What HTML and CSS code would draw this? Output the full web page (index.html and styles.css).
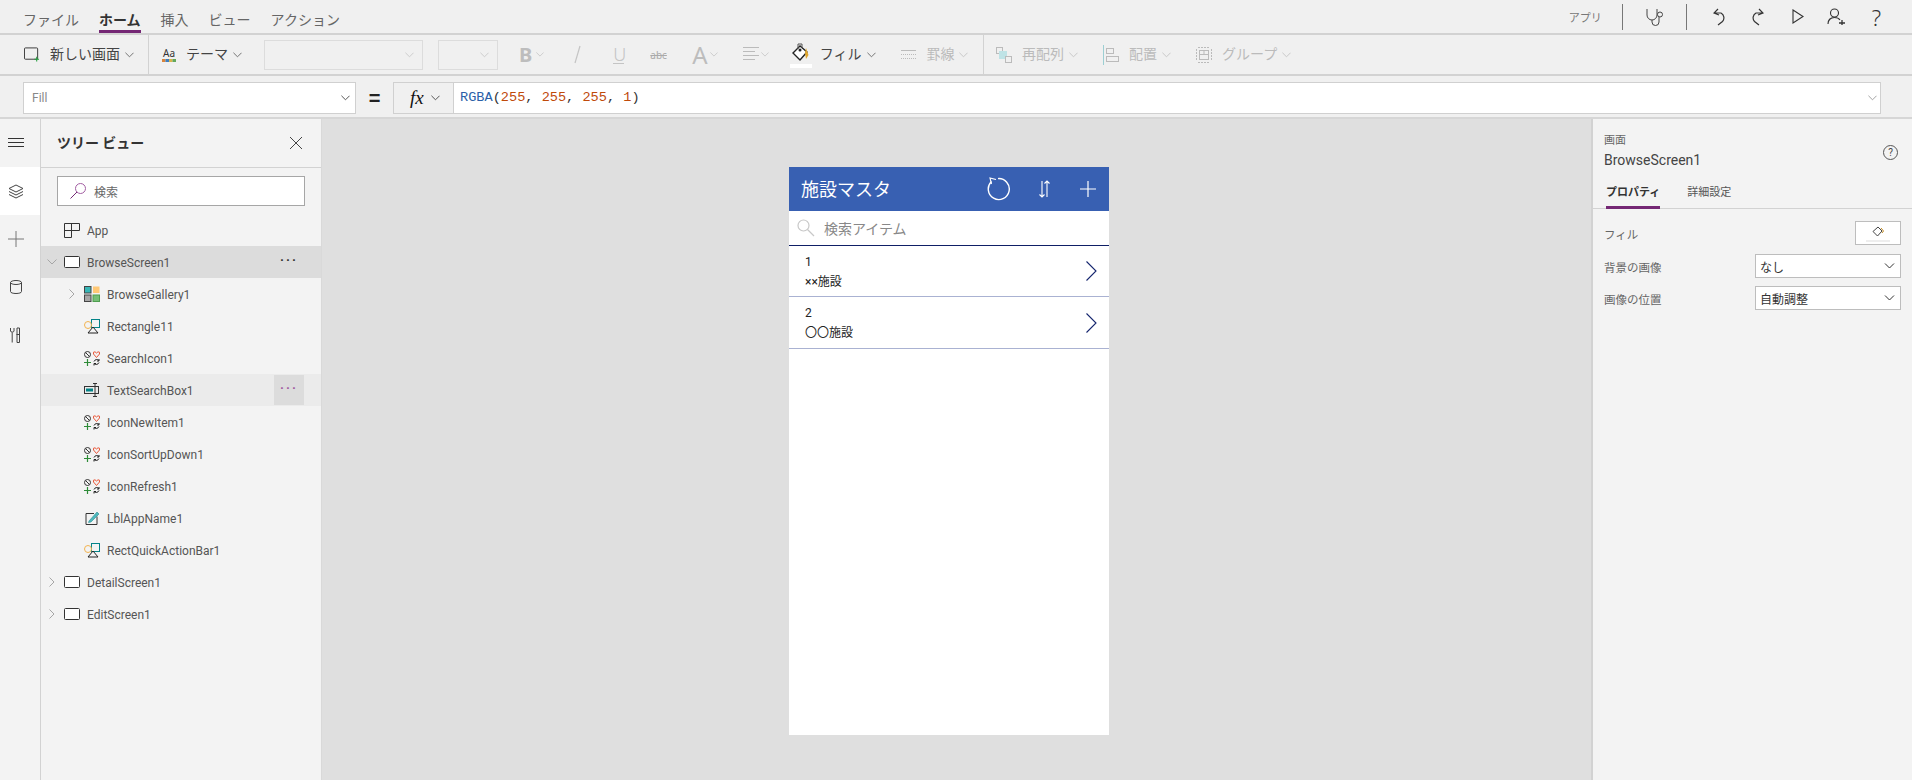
FILE: index.html
```html
<!DOCTYPE html>
<html lang="ja">
<head>
<meta charset="utf-8">
<title>Power Apps Studio</title>
<link rel="stylesheet" href="styles.css">
</head>
<body>
<svg class="sprite" xmlns="http://www.w3.org/2000/svg">
  <symbol id="chev" viewBox="0 0 10 6"><path d="M.5.5 5 5 9.5.5" fill="none" stroke="currentColor"/></symbol>
  <symbol id="chevr" viewBox="0 0 6 10"><path d="M.5.5 5 5 .5 9.500" fill="none" stroke="currentColor"/></symbol>
  <symbol id="screen" viewBox="0 0 16 12"><rect x=".5" y=".5" width="15" height="11" rx="1" fill="#fff" stroke="#333"/></symbol>
  <symbol id="shapes" viewBox="0 0 16 15"><rect x="7.500" y=".5" width="8" height="8" fill="none" stroke="#038387"/><path d="M9 8 14 14H4Z" fill="#f3f3f3" stroke="#222"/><circle cx="4" cy="6" r="3.500" fill="none" stroke="#f2b350"/></symbol>
  <symbol id="icons" viewBox="0 0 16 15"><circle cx="3.500" cy="3.500" r="3" fill="none" stroke="#333"/><path d="M1.500 1.500 5.500 5.500" stroke="#333"/><path d="M12.500 6.500 9.500 3V1.200L11 .8 12.500 2 14 .8 15.500 1.200V3Z" fill="none" stroke="#e8583a"/><path d="M0 11.500h7M3.500 8v7" stroke="#2e8b38" stroke-width="1.200"/><path d="M10 10.500A3 3 0 0 1 15 9.500M15 11.500A3 3 0 0 1 10 12.500M15 8v2h-2M10 14.500V12.500h2" fill="none" stroke="#222"/></symbol>
</svg>

<header class="menubar">
  <nav class="tabs">
    <span class="tab">ファイル</span>
    <span class="tab tab-on">ホーム</span>
    <span class="tab">挿入</span>
    <span class="tab">ビュー</span>
    <span class="tab">アクション</span>
  </nav>
  <div class="actions">
    <span class="app-label">アプリ</span>
    <i class="vsep sep-a"></i>
    <svg class="act steth" width="20" height="18" viewBox="0 0 20 18"><path d="M1 1V7A5 5 0 0 0 11 7V1M6 12V14A3.500 3.500 0 0 0 13 14V9" fill="none" stroke="#444"/><circle cx="14" cy="6.500" r="2.500" fill="none" stroke="#444"/></svg>
    <i class="vsep sep-b"></i>
    <svg class="act undo" width="15" height="18" viewBox="0 0 15 18"><path d="M5 1 1 5 6 7M1 5H8A5.500 5.500 0 0 1 9.500 13.500L5 17" fill="none" stroke="#333" stroke-width="1.200"/></svg>
    <svg class="act redo" width="15" height="18" viewBox="0 0 15 18"><path d="M10 1 14 5 9 7M14 5H7A5.500 5.500 0 0 0 5.500 13.500L10 17" fill="none" stroke="#333" stroke-width="1.200"/></svg>
    <svg class="act play" width="12" height="15" viewBox="0 0 12 15"><path d="M1 1 11 7.500 1 14Z" fill="none" stroke="#333" stroke-width="1.100"/></svg>
    <svg class="act user" width="18" height="17" viewBox="0 0 18 17"><circle cx="7.500" cy="5" r="4" fill="none" stroke="#333" stroke-width="1.100"/><path d="M1 16C1 12 3.500 9.500 7.500 9.500 10 9.500 12 10.500 13 12" fill="none" stroke="#333" stroke-width="1.100"/><path d="M12 15h6M15 12v6" stroke="#333" stroke-width="1.300"/></svg>
    <span class="act qmark">?</span>
  </div>
</header>

<div class="toolbar">
  <div class="tg tg-first">
    <div class="tool">
      <svg class="ico16" width="16" height="15" viewBox="0 0 17 15"><rect x=".5" y=".5" width="14" height="12" rx="1" fill="none" stroke="#333"/><path d="M11 12.500h5M13.500 10v5" stroke="#1f9d39" stroke-width="1.100"/></svg>
      <span class="lbl">新しい画面</span>
      <svg class="cv" width="9" height="6"><use href="#chev"/></svg>
    </div>
  </div>
  <div class="tg tg-mid">
    <div class="tool">
      <span class="aa"><span class="aa-t">Aa</span><svg class="aa-bar" width="14" height="3" viewBox="0 0 14 3"><rect width="3.500" height="3" fill="#d9843b"/><rect x="3.500" width="3.500" height="3" fill="#3f7fbf"/><rect x="7" width="3.500" height="3" fill="#d9b44a"/><rect x="10.500" width="3.500" height="3" fill="#63a85c"/></svg></span>
      <span class="lbl l-theme">テーマ</span>
      <svg class="cv" width="9" height="6"><use href="#chev"/></svg>
    </div>
    <div class="dd dd-font"><svg class="cv-off" width="9" height="6"><use href="#chev"/></svg></div>
    <div class="dd dd-size"><svg class="cv-off" width="9" height="6"><use href="#chev"/></svg></div>
    <div class="tool off t-b"><span class="g-b">B</span><svg class="cv" width="8" height="5"><use href="#chev"/></svg></div>
    <svg class="t-i" width="7" height="19" viewBox="0 0 7 19"><path d="M6 1 1 18" stroke="#c4c4c4" stroke-width="1.200"/></svg>
    <div class="t-u"><span class="g-u">U</span></div>
    <div class="t-abc"><span class="g-abc">abc</span></div>
    <div class="tool off t-a"><span class="g-a">A</span><svg class="cv" width="8" height="5"><use href="#chev"/></svg></div>
    <div class="tool off t-al">
      <svg width="16" height="17" viewBox="0 0 16 17"><path d="M0 1.500h16M0 5.500h12M0 9.500h16M0 13.500h12" stroke="#bbb"/></svg>
      <svg class="cv" width="8" height="5"><use href="#chev"/></svg>
    </div>
    <div class="tool t-fill">
      <span class="fill-wrap">
        <svg width="19" height="22" viewBox="0 0 19 22"><path d="M9 3 2 10 9 17 16 9Z" fill="#fff" stroke="#222" stroke-width="1.400"/><path d="M7 1V6M7 1H11V5" fill="none" stroke="#555"/><circle cx="9" cy="7" r="1.500" fill="#222"/><path d="M15 5 17.500 12 15 16 14 10Z" fill="#e0a72e"/></svg>
        <i class="swatch"></i>
      </span>
      <span class="lbl l-fill">フィル</span>
      <svg class="cv cv-fill" width="9" height="6"><use href="#chev"/></svg>
    </div>
    <div class="tool off t-bd">
      <svg width="15" height="11" viewBox="0 0 15 11"><path d="M0 1.500h15" stroke="#bbb"/><path d="M0 5.500h15M0 9.500h15" stroke="#bbb" stroke-dasharray="1 1"/></svg>
      <span class="lbl">罫線</span>
      <svg class="cv" width="9" height="6"><use href="#chev"/></svg>
    </div>
  </div>
  <div class="tg tg-last">
    <div class="tool off">
      <svg width="16" height="16" viewBox="0 0 16 16"><rect x=".5" y=".5" width="6" height="6" fill="none" stroke="#bbb"/><rect x="3" y="4" width="8" height="8" fill="#bfe3e6"/><rect x="9.500" y="9.500" width="6" height="6" fill="#f0f0f0" stroke="#bbb"/></svg>
      <span class="lbl">再配列</span>
      <svg class="cv" width="9" height="6"><use href="#chev"/></svg>
    </div>
    <div class="tool off t-pos">
      <svg width="16" height="20" viewBox="0 0 16 20"><path d="M.5 0V20" stroke="#9ccfd3"/><rect x="3.500" y="3.500" width="7" height="5" fill="none" stroke="#bbb"/><rect x="3.500" y="11.500" width="12" height="5" fill="none" stroke="#bbb"/></svg>
      <span class="lbl">配置</span>
      <svg class="cv" width="9" height="6"><use href="#chev"/></svg>
    </div>
    <div class="tool off t-grp">
      <svg width="16" height="16" viewBox="0 0 16 16"><path d="M.5 2V14M15.500 2V14M2 .5H14M2 15.500H14" fill="none" stroke="#bbb" stroke-dasharray="2 1"/><rect x="3.500" y="3.500" width="9" height="9" fill="none" stroke="#bbb"/><path d="M3.500 7.500H12.500M8 3.500V7.500" stroke="#bbb"/></svg>
      <span class="lbl">グループ</span>
      <svg class="cv" width="9" height="6"><use href="#chev"/></svg>
    </div>
  </div>
</div>

<div class="formula">
  <div class="prop"><span>Fill</span><svg class="cv-f" width="9" height="6"><use href="#chev"/></svg></div>
  <span class="eq">=</span>
  <div class="fx"><span class="fx-t">fx</span><svg class="cv-f" width="9" height="6"><use href="#chev"/></svg></div>
  <div class="fbox"><code class="code"><span class="fn">RGBA</span>(<span class="num">255</span>, <span class="num">255</span>, <span class="num">255</span>, <span class="num">1</span>)</code><svg class="cv-g" width="9" height="6"><use href="#chev"/></svg></div>
</div>

<main class="body">
  <aside class="rail">
    <div class="rail-i"><svg width="16" height="10" viewBox="0 0 16 10"><path d="M0 .5h16M0 4.500h16M0 8.500h16" stroke="#333"/></svg></div>
    <div class="rail-i rail-on"><svg width="16" height="15" viewBox="0 0 16 15"><path d="M8 1 15 4.500 8 8 1 4.500Z" fill="none" stroke="#444"/><path d="M1 7.500 8 11 15 7.500M1 10.500 8 14 15 10.500" fill="none" stroke="#444"/></svg></div>
    <div class="rail-i"><svg width="16" height="16" viewBox="0 0 16 16"><path d="M0 8h16M8 0v16" stroke="#777"/></svg></div>
    <div class="rail-i"><svg width="12" height="14" viewBox="0 0 12 14"><path d="M.5 2.500V11.500C.5 12.800 3 13.500 6 13.500S11.500 12.800 11.500 11.500V2.500" fill="none" stroke="#444"/><ellipse cx="6" cy="2.500" rx="5.500" ry="2" fill="none" stroke="#444"/></svg></div>
    <div class="rail-i"><svg width="11" height="16" viewBox="0 0 11 16"><path d="M.5 1V4C.5 5.500 4 5.500 4 4V1M2.200 5.500V15.500M7 1V15.500H9.500V1ZM6.500 7.500H10" fill="none" stroke="#444"/></svg></div>
  </aside>

  <section class="tree">
    <div class="tree-head"><h2 class="tree-title">ツリー ビュー</h2>
      <svg width="12" height="12" viewBox="0 0 12 12"><path d="M0 0 12 12M12 0 0 12" stroke="#444"/></svg></div>
    <div class="tree-search">
      <svg width="16" height="16" viewBox="0 0 16 16"><circle cx="10.500" cy="5.500" r="5" fill="none" stroke="#a25ea2"/><path d="M7 9 .5 15.500" stroke="#742774"/></svg>
      <span>検索</span>
    </div>
    <ul class="rows">
      <li class="row d0"><i class="slot"></i><svg class="ri" width="16" height="15" viewBox="0 0 16 15"><path d="M.5 7.500H15.500M7.500 .5V14.500H.5V.5H15.500V7.500" fill="none" stroke="#333"/></svg><span>App</span></li>
      <li class="row d0 sel"><i class="slot"><svg width="10" height="6" class="c-t"><use href="#chev"/></svg></i><svg class="ri" width="16" height="12"><use href="#screen"/></svg><span>BrowseScreen1</span><b class="more">···</b></li>
      <li class="row d1"><i class="slot"><svg width="6" height="10" class="c-t"><use href="#chevr"/></svg></i><svg class="ri" width="16" height="16" viewBox="0 0 16 16"><rect x=".5" y=".5" width="6.500" height="6.500" fill="#38b6b6" stroke="#444"/><rect x="9" y=".5" width="6.500" height="6.500" fill="#ffc875"/><rect x=".5" y="9" width="6.500" height="6.500" fill="#a6a6a6" stroke="#444"/><rect x="9" y="9" width="6.500" height="6.500" fill="#76bf76" stroke="#4f9d4f"/></svg><span>BrowseGallery1</span></li>
      <li class="row d1"><i class="slot"></i><svg class="ri" width="16" height="15"><use href="#shapes"/></svg><span>Rectangle11</span></li>
      <li class="row d1"><i class="slot"></i><svg class="ri" width="16" height="15"><use href="#icons"/></svg><span>SearchIcon1</span></li>
      <li class="row d1 hov"><i class="slot"></i><svg class="ri" width="16" height="14" viewBox="0 0 16 14"><rect x=".5" y="3.500" width="14" height="7" fill="none" stroke="#333"/><rect x="2" y="5.500" width="7" height="3" fill="#038387"/><path d="M9 .5h4M11 .5V13.500M9 13.500h4" fill="none" stroke="#333"/></svg><span>TextSearchBox1</span><b class="more more-on">···</b></li>
      <li class="row d1"><i class="slot"></i><svg class="ri" width="16" height="15"><use href="#icons"/></svg><span>IconNewItem1</span></li>
      <li class="row d1"><i class="slot"></i><svg class="ri" width="16" height="15"><use href="#icons"/></svg><span>IconSortUpDown1</span></li>
      <li class="row d1"><i class="slot"></i><svg class="ri" width="16" height="15"><use href="#icons"/></svg><span>IconRefresh1</span></li>
      <li class="row d1"><i class="slot"></i><svg class="ri" width="16" height="14" viewBox="0 0 16 14"><path d="M13 5.500V13.500H2V2.500H10" fill="none" stroke="#333"/><path d="M5 10 13 1 15 3 7 11 4.500 11.500Z" fill="#4fb8bd" stroke="#2a8f95" stroke-width=".6"/></svg><span>LblAppName1</span></li>
      <li class="row d1"><i class="slot"></i><svg class="ri" width="16" height="15"><use href="#shapes"/></svg><span>RectQuickActionBar1</span></li>
      <li class="row d0"><i class="slot"><svg width="6" height="10" class="c-t"><use href="#chevr"/></svg></i><svg class="ri" width="16" height="12"><use href="#screen"/></svg><span>DetailScreen1</span></li>
      <li class="row d0"><i class="slot"><svg width="6" height="10" class="c-t"><use href="#chevr"/></svg></i><svg class="ri" width="16" height="12"><use href="#screen"/></svg><span>EditScreen1</span></li>
    </ul>
  </section>

  <section class="canvas">
    <div class="phone">
      <div class="ph-head">
        <span class="ph-title">施設マスタ</span>
        <svg class="ph-refresh" width="24" height="24" viewBox="0 0 24 24"><path d="M4.500 4.500A10.500 10.500 0 1 0 11 1.600" fill="none" stroke="#fff" stroke-width="1.400"/><path d="M9 2.500 3 1 4.500 7" fill="none" stroke="#fff" stroke-width="1.100"/></svg>
        <svg class="ph-sort" width="11" height="18" viewBox="0 0 11 18"><path d="M3 1V17M.5 14.500 3 17 5.500 14.500M8 17V1M5.500 3.500 8 1 10.500 3.500" fill="none" stroke="#fff" stroke-width="1.100"/></svg>
        <svg class="ph-plus" width="16" height="16" viewBox="0 0 16 16"><path d="M0 8H16M8 0V16" stroke="#fff" stroke-width="1.200"/></svg>
      </div>
      <div class="ph-search">
        <svg width="18" height="18" viewBox="0 0 18 18"><circle cx="6.500" cy="6.500" r="5.500" fill="none" stroke="#c8c8c8" stroke-width="1.200"/><path d="M10.500 10.500 17 17" stroke="#c8c8c8" stroke-width="1.200"/></svg>
        <span>検索アイテム</span>
      </div>
      <div class="ph-row">
        <div class="ph-txt"><span class="ph-n">1</span><span class="ph-s">××施設</span></div>
        <svg width="11" height="20" viewBox="0 0 11 20"><path d="M.5.5 10 10 .5 19.500" fill="none" stroke="#15256e" stroke-width="1.100"/></svg>
      </div>
      <div class="ph-row">
        <div class="ph-txt"><span class="ph-n">2</span><span class="ph-s">〇〇施設</span></div>
        <svg width="11" height="20" viewBox="0 0 11 20"><path d="M.5.5 10 10 .5 19.500" fill="none" stroke="#15256e" stroke-width="1.100"/></svg>
      </div>
    </div>
  </section>

  <aside class="props">
    <div class="pr-head">
      <div class="pr-names"><span class="pr-kind">画面</span><span class="pr-name">BrowseScreen1</span></div>
      <span class="help">?</span>
    </div>
    <div class="pr-tabs">
      <span class="pr-tab pr-on">プロパティ</span>
      <span class="pr-tab">詳細設定</span>
    </div>
    <div class="pr-form">
      <div class="pr-line pr-fill"><span class="pr-lb">フィル</span>
        <div class="fillbtn"><svg width="13" height="11" viewBox="0 0 13 11"><path d="M6 1 1 5.500 5.500 10 10 5Z" fill="#fff" stroke="#444"/><path d="M9 2 11.500 5 10 7" fill="none" stroke="#c08a22"/></svg><i class="fb-swatch"></i></div>
      </div>
      <div class="pr-line"><span class="pr-lb">背景の画像</span><div class="pr-dd"><span>なし</span><svg width="11" height="6"><use href="#chev"/></svg></div></div>
      <div class="pr-line"><span class="pr-lb">画像の位置</span><div class="pr-dd"><span>自動調整</span><svg width="11" height="6"><use href="#chev"/></svg></div></div>
    </div>
  </aside>
</main>
</body>
</html>
```

FILE: styles.css
```css
* { box-sizing: border-box; }
html, body { margin: 0; padding: 0; }
body {
  width: 1912px; height: 780px; overflow: hidden;
  background: #f0f0f0; color: #333;
  font-family: Roboto, "Noto Sans CJK JP", sans-serif;
  font-size: 12px;
}
i { display: block; font-style: normal; }
svg { display: block; flex: none; }
.sprite { display: none; }

/* menu */
.menubar {
  height: 35px; display: flex; justify-content: space-between;
  border-bottom: 2px solid #d2d2d2; padding-left: 23px;
}
.tabs { display: flex; gap: 20px; }
.tab {
  font-size: 14px; line-height: 20px; height: 33px; padding-top: 9px; color: #666;
  font-family: "Noto Sans CJK JP", sans-serif;
}
.tab-on { color: #333; font-weight: 700; border-bottom: 3px solid #742774; height: 33px; }
.actions { display: flex; align-items: center; height: 33px; padding-right: 31px; }
.app-label { font-size: 11px; color: #777; font-family: "Noto Sans CJK JP", sans-serif; margin-right: 20px; }
.vsep { width: 1px; height: 26px; background: #777; }
.steth { margin-left: 23px; }
.sep-b { margin-left: 20px; }
.undo { margin-left: 26px; }
.redo { margin-left: 21px; }
.play { margin-left: 28px; }
.user { margin-left: 23px; }
.qmark { margin-left: 27px; font-size: 22px; line-height: 24px; font-family: "Noto Sans", sans-serif; font-weight: 300; color: #333; }

/* toolbar */
.toolbar {
  height: 41px; display: flex; border-bottom: 2px solid #d2d2d2;
  font-family: "Noto Sans CJK JP", sans-serif; font-size: 14px;
}
.tg { display: flex; align-items: center; height: 39px; border-right: 1px solid #d2d2d2; }
.tg-first { width: 149px; padding-left: 24px; }
.tg-mid { width: 835px; padding-left: 13px; }
.tg-last { border-right: 0; padding-left: 12px; }
.tool { display: flex; align-items: center; color: #444; }
.off { color: #bbb; }
.lbl { line-height: 20px; margin-left: 10px; position: relative; top: -2px; }
.cv { margin-left: 5px; color: #666; }
.cv-fill { margin-left: 6px; }
.off .cv { color: #c4c4c4; }
.aa { width: 14px; display: flex; flex-direction: column; align-items: center; }
.aa-t { font-size: 10px; line-height: 11px; font-family: "Noto Sans", sans-serif; color: #333; }
.l-theme { margin-left: 10px; }
.dd { height: 30px; background: #f0f0f0; border: 1px solid #dcdcdc; display: flex; align-items: center; justify-content: flex-end; }
.dd-font { width: 159px; margin-left: 22px; padding-right: 8px; }
.dd-size { width: 60px; margin-left: 15px; padding-right: 8px; }
.cv-off { color: #c8c8c8; }
.t-b { margin-left: 21px; }
.g-b { font: 700 20px/20px "Noto Sans", sans-serif; color: #bdbdbd; }
.t-b .cv { margin-left: 4px; }
.t-i { margin-left: 30px; }
.t-u { margin-left: 32px; }
.g-u { display: block; font: 300 18px/18px "Noto Sans", sans-serif; color: #c4c4c4; border-bottom: 1px solid #c4c4c4; width: 11px; }
.t-abc { margin-left: 26px; width: 16px; }
.g-abc { font: 400 10px/12px "Noto Sans", sans-serif; color: #aaa; text-decoration: line-through; display: block; }
.t-a { margin-left: 26px; }
.g-a { font: 400 24px/24px "Noto Sans", sans-serif; color: #bdbdbd; }
.t-a .cv { margin-left: 2px; }
.t-al { margin-left: 25px; }
.t-al .cv { margin-left: 2px; }
.t-fill { margin-left: 21px; }
.fill-wrap { width: 22px; display: flex; flex-direction: column; align-items: center; margin-top: 1px; }
.swatch { width: 22px; height: 4px; background: #fff; margin-top: -1px; }
.l-fill { margin-left: 8px; }
.t-bd { margin-left: 25px; }
.t-pos, .t-grp { margin-left: 25px; }

/* formula */
.formula {
  height: 43px; display: flex; align-items: center; padding: 6px 31px 3px 23px;
  border-bottom: 2px solid #d6d6d6;
}
.prop {
  width: 333px; height: 32px; background: #fff; border: 1px solid #d0d0d0;
  display: flex; align-items: center; justify-content: space-between; padding: 0 5px 0 8px;
  color: #888; font-size: 12px;
}
.cv-f { color: #444; }
.eq { width: 37px; text-align: center; font: 700 20px/20px "Liberation Sans", sans-serif; color: #222; }
.fx {
  width: 60px; height: 32px; background: #f0f0f0; border: 1px solid #d0d0d0; border-right: 0;
  display: flex; align-items: center; padding-left: 16px;
}
.fx-t { font: italic 400 19px/20px "Liberation Serif", serif; color: #111; width: 21px; }
.fbox {
  flex: 1; height: 32px; background: #fff; border: 1px solid #d0d0d0;
  display: flex; align-items: center; justify-content: space-between; padding: 0 3px 0 6px;
}
.code { font: 400 13.6px/20px "Liberation Mono", monospace; color: #333; }
.fn { color: #2b5fa8; }
.num { color: #c04a0a; }
.cv-g { color: #999; }

/* body */
.body { display: flex; height: 661px; }
.rail { width: 41px; flex: none; background: #f3f3f3; border-right: 1px solid #d2d2d2; }
.rail-i { height: 48px; display: flex; align-items: center; justify-content: center; padding-right: 9px; }
.rail-on { background: #fff; }

.tree { width: 281px; flex: none; background: #f3f3f3; border-right: 1px solid #d9d9d9; }
.tree-head {
  height: 49px; display: flex; align-items: center; justify-content: space-between;
  padding: 0 19px 1px 16px; border-bottom: 1px solid #d2d2d2;
}
.tree-title { margin: 0 0 2px; font: 700 14px/20px "Noto Sans CJK JP", sans-serif; color: #333; }
.tree-search {
  width: 248px; height: 30px; margin: 8px 0 8px 16px; background: #fff; border: 1px solid #a6a6a6;
  display: flex; align-items: center; padding-left: 12px; gap: 8px;
  color: #666; font-family: "Noto Sans CJK JP", sans-serif;
}
.rows { list-style: none; margin: 0; padding: 0; }
.row { height: 32px; display: flex; align-items: center; color: #555; }
.row span { padding-top: 2px; }
.d0 { padding-left: 3px; }
.d1 { padding-left: 23px; }
.slot { width: 20px; display: flex; justify-content: center; padding-right: 4px; }
.c-t { color: #a6a6a6; }
.ri { margin-right: 7px; }
.sel { background: #dcdcdc; }
.hov { background: #ebebeb; }
.more {
  margin-left: auto; margin-right: 17px; width: 30px; height: 30px; line-height: 26px;
  text-align: center; font-size: 13px; font-weight: 700; color: #333; letter-spacing: 2px;
}
.more-on { background: #dcdcdc; color: #a25ea2; }

.canvas { flex: 1; background: #dfdfdf; padding: 48px 0 0 467px; }
.phone { width: 320px; height: 568px; background: #fff; }
.ph-head { height: 44px; background: #3860b2; color: #fff; display: flex; align-items: center; padding-left: 12px; }
.ph-title { font: 400 18px/24px "Noto Sans CJK JP", sans-serif; width: 186px; margin-bottom: 3px; }
.ph-refresh { margin-right: 28px; }
.ph-sort { margin-right: 30px; }
.ph-search {
  height: 35px; border-bottom: 1px solid #0f1f66; display: flex; align-items: center;
  padding-left: 8px; gap: 9px; color: #888; font: 400 14px/20px "Noto Sans CJK JP", sans-serif;
}
.ph-row {
  height: 52px; border-bottom: 1px solid #aab2d2; display: flex; align-items: center;
  justify-content: space-between; padding: 0 12px 0 16px;
}
.ph-search + .ph-row { height: 51px; }
.ph-txt { display: flex; flex-direction: column; gap: 3px; color: #222; padding-top: 2px; }
.ph-n, .ph-s { line-height: 17px; font-family: Roboto, "Noto Sans CJK JP", sans-serif; }

.props { width: 321px; flex: none; background: #f3f3f3; border-left: 2px solid #d2d2d2; }
.pr-head { height: 61px; display: flex; justify-content: space-between; padding: 12px 14px 0 11px; }
.pr-names { display: flex; flex-direction: column; gap: 3px; }
.pr-kind { font: 400 11px/16px "Noto Sans CJK JP", sans-serif; color: #666; }
.pr-name { font-size: 14px; line-height: 20px; color: #444; }
.help { width: 15px; height: 15px; border: 1px solid #555; border-radius: 50%; text-align: center; line-height: 13px; font-size: 10px; margin-top: 14px; color: #444; }
.pr-tabs { display: flex; height: 29px; padding-left: 13px; gap: 27px; border-bottom: 1px solid #d2d2d2; font-family: "Noto Sans CJK JP", sans-serif; font-size: 11px; line-height: 22px; color: #555; }
.pr-tab { height: 29px; }
.pr-on { font-weight: 700; color: #333; border-bottom: 3px solid #742774; }
.pr-form { padding: 12px 11px 0 11px; font-family: "Noto Sans CJK JP", sans-serif; color: #666; }
.pr-line { height: 24px; margin-bottom: 8px; display: flex; justify-content: space-between; align-items: center; font-size: 11.500px; }
.pr-lb { padding-top: 2px; }
.pr-fill { margin-bottom: 9px; }
.fillbtn { width: 46px; height: 24px; background: #fff; border: 1px solid #bdbdbd; display: flex; flex-direction: column; align-items: center; padding-top: 4px; }
.fb-swatch { width: 24px; height: 2px; background: #eee; margin-top: 3px; }
.pr-dd { width: 146px; height: 24px; background: #fff; border: 1px solid #bdbdbd; display: flex; align-items: center; justify-content: space-between; padding: 0 5px 0 4px; color: #333; font-size: 12px; }
```
